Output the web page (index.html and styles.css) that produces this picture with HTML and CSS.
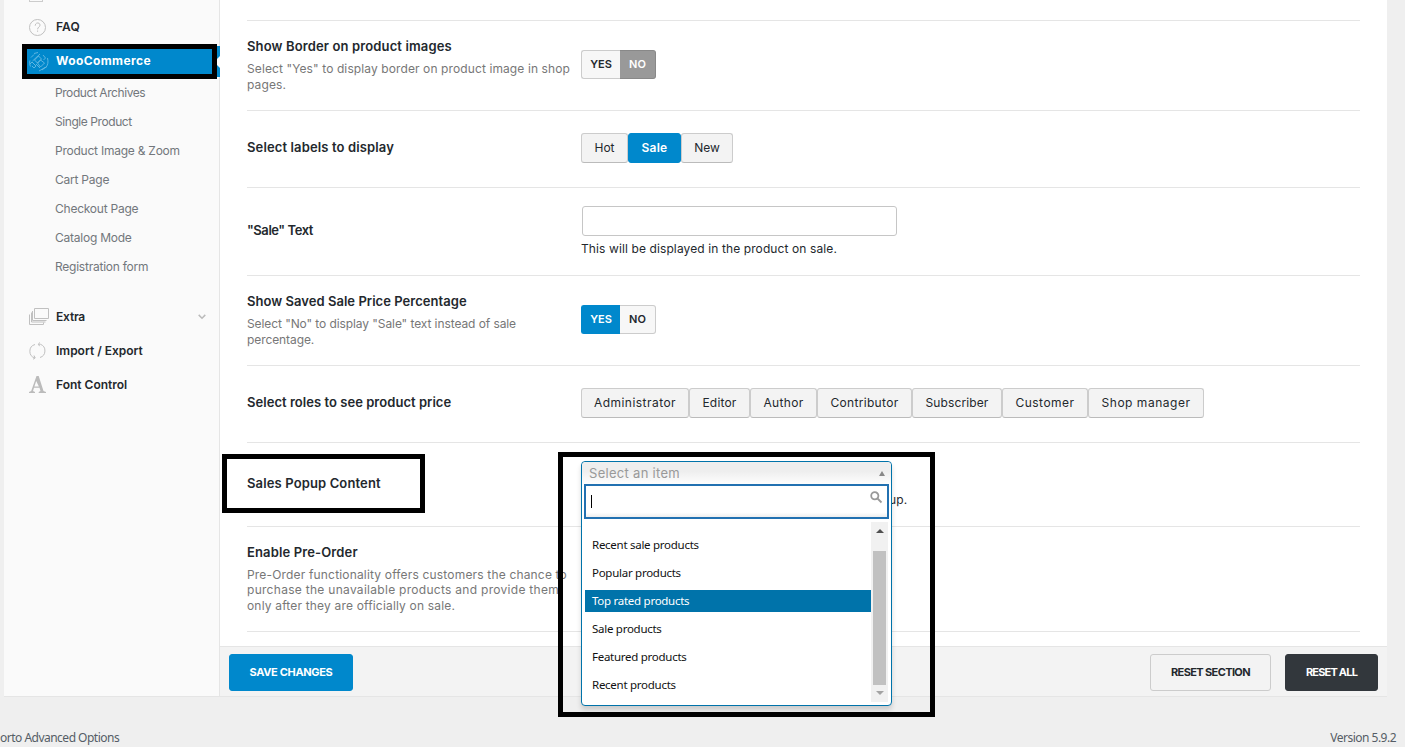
FILE: index.html
```html
<!DOCTYPE html>
<html lang="en">
<head>
<meta charset="utf-8">
<title>Porto Advanced Options</title>
<link rel="stylesheet" href="styles.css">
</head>
<body>
<div class="page">
  <div class="panel">
    <nav class="sidebar">
      <div class="cut"></div>
      <a class="item"><svg class="icon" width="20" height="20" viewBox="0 0 20 20"><circle cx="8.500" cy="10.500" r="8" /><path d="M6.200 8.700c0-3.600 4.800-3.600 4.800-.6 0 2-2.400 2-2.400 4.200M8.600 13.500v1.300"/></svg><span class="faq">FAQ</span></a>
      <a class="item active"><svg class="icon" width="20" height="20" viewBox="0 0 20 20"><path d="M5 1.500l4-1M2 5.500l3-3M3.500 9l7.500-7M1 12l2-2 4 4-2 2-2-2M5.500 8l4-4 3 3-4 4zM8.500 11l3-3 4 3-4 4zM7 12l4 4M10 19l6-3.500M13 18l4-3M18.500 6c1 4 .5 7-2 10M14 3l2.500 3-2 2M1 8.500c-.6 2-.4 4 .5 6"/></svg><span class="woo">WooCommerce</span></a>
      <div class="subs">
        <a class="tight">Product Archives</a>
        <a class="tight">Single Product</a>
        <a>Product Image &amp; Zoom</a>
        <a>Cart Page</a>
        <a>Checkout Page</a>
        <a>Catalog Mode</a>
        <a>Registration form</a>
      </div>
      <a class="item"><svg class="icon" width="20" height="20" viewBox="0 0 20 20"><path d="M5.500 1.500h14v10h-14zM3.500 4v9.500h14M2.500 5.500v9.500h14M.5 7.500v10h14v-2"/></svg><span class="extra">Extra</span><svg class="chev" width="8" height="6" viewBox="0 0 8 6"><path d="M.7.900L4 4.200 7.300.9"/></svg></a>
      <a class="item"><svg class="icon" width="20" height="20" viewBox="0 0 20 20"><path d="M6 3.500a7 7 0 0 0 0 13.500M4 18.200l2.200-1.200-1.200-2.500M11 16.500a7 7 0 0 0 .5-13.200H9.500M11 1.500l-1.800 1.700 1.500 2"/></svg><span>Import / Export</span></a>
      <a class="item"><svg class="icon solid" width="20" height="20" viewBox="0 0 20 20"><path d="M7.500 1h2.200l4.800 15 2.500 1v1H9.700v-1l1.800-1-1-3.200H5L4 16l2 1v1H0v-1l2.200-1zM7.200 6L5.400 11.500h4.500z" fill-rule="evenodd"/></svg><span>Font Control</span></a>
    </nav>
    <main class="main">
      <div class="rows">
        <section class="row r0"></section>
        <section class="row r1">
          <div class="label"><h3 class="wide">Show Border on product images</h3><p>Select "Yes" to display border on product image in shop<br>pages.</p></div>
          <div class="switch"><span class="yes">YES</span><span class="no off">NO</span></div>
        </section>
        <section class="row r2">
          <div class="label"><h3 class="wide">Select labels to display</h3></div>
          <div class="set"><span class="b47">Hot</span><span class="b53 on">Sale</span><span class="b52">New</span></div>
        </section>
        <section class="row r3">
          <div class="label"><h3 class="quoted">"Sale" Text</h3></div>
          <div class="field"><input type="text"><div class="note">This will be displayed in the product on sale.</div></div>
        </section>
        <section class="row r1">
          <div class="label"><h3>Show Saved Sale Price Percentage</h3><p class="narrow">Select "No" to display "Sale" text instead of sale<br>percentage.</p></div>
          <div class="switch"><span class="yes on">YES</span><span class="no">NO</span></div>
        </section>
        <section class="row r2">
          <div class="label"><h3>Select roles to see product price</h3></div>
          <div class="set roles"><span class="b108">Administrator</span><span class="b61">Editor</span><span class="b67">Author</span><span class="b95">Contributor</span><span class="b90">Subscriber</span><span class="b86">Customer</span><span class="b116">Shop manager</span></div>
        </section>
        <section class="row r6">
          <div class="label"><h3 class="wide">Sales Popup Content</h3></div>
          <div class="popup">
            <span class="note tail">up.</span>
            <div class="select">
              <div class="head"><span>Select an item</span><i class="up"></i></div>
              <div class="search"><span class="caret"></span><svg width="13" height="13" viewBox="0 0 13 13"><circle cx="4.800" cy="4.800" r="3.600"/><path d="M7.500 7.500l4 4"/></svg></div>
              <div class="list">
                <div class="options"><div>Recent sale products</div><div>Popular products</div><div class="hl">Top rated products</div><div>Sale products</div><div>Featured products</div><div>Recent products</div></div>
                <div class="bar"><i class="up dark"></i><b></b><i class="down"></i></div>
              </div>
            </div>
          </div>
        </section>
        <section class="row r7">
          <div class="label"><h3 class="wide">Enable Pre-Order</h3><p class="long">Pre-Order functionality offers customers the chance to<br><span>purchase the unavailable products and provide them</span><br>only after they are officially on sale.</p></div>
        </section>
      </div>
      <footer class="actions">
        <button class="save">SAVE CHANGES</button><button class="section">RESET SECTION</button><button class="all">RESET ALL</button>
      </footer>
    </main>
  </div>
  <div class="foot"><span>orto Advanced Options</span><span>Version 5.9.2</span></div>
  <div class="mark m1"></div><div class="mark m2"></div><div class="mark m3"></div>
</div>
</body>
</html>
```
FILE: styles.css
```css
* { box-sizing: border-box; }
body { margin: 0; background: #efefef; font-family: Inter, "Liberation Sans", sans-serif; font-size: 12px; color: #23282d; }
.page { position: relative; width: 1405px; height: 747px; overflow: hidden; }
.panel { display: flex; margin: 0 18px 0 4px; height: 697px; border-bottom: 1px solid #e5e5e5; }

.sidebar { width: 216px; background: #fafafa; border-right: 1px solid #e5e5e5; }
.cut { width: 14px; height: 2px; margin: 0 0 8px 25px; border: 1px solid #ccc; border-top: 0; }
.item { display: flex; align-items: center; height: 34px; padding-left: 25px; font-weight: 600; position: relative; white-space: nowrap; }
.item span { padding-bottom: 2px; }
.faq { letter-spacing: .16px; }
.woo { letter-spacing: .39px; }
.extra { letter-spacing: -.2px; }
.icon { width: 20px; height: 20px; margin-right: 7px; fill: none; stroke: #c0c0c0; stroke-width: 1; }
.icon.solid { fill: #bbb; stroke: none; }
.active { height: 31px; margin: 2px -1px 1px 20px; padding-left: 5px; background: #0088cc; color: #fff; font-weight: 700; }
.active .icon { stroke: #74c0e6; stroke-width: .8; }
.active::after { content: ""; position: absolute; right: 0; top: 10px; border: 6px solid transparent; border-right-color: #fff; border-left: 0; }
.chev { margin-left: auto; margin-right: 13px; fill: none; stroke: #bbb; stroke-width: 1.5; }
.subs { display: flex; flex-direction: column; align-items: flex-start; padding-left: 51px; margin-bottom: 19px; color: #72777c; letter-spacing: -.235px; }
.subs a { height: 29px; line-height: 29px; white-space: nowrap; }
.subs .tight { letter-spacing: -.43px; }

.main { flex: 1; display: flex; flex-direction: column; background: #fff; }
.rows { height: 646px; padding: 0 27px; }
.row { display: flex; align-items: center; border-bottom: 1px solid #e5e5e5; }
.r0 { height: 21px; }
.r1 { height: 90px; }
.r2 { height: 77px; }
.r3 { height: 88px; }
.r6 { height: 84px; }
.r7 { height: 105px; }
.label { width: 334px; white-space: nowrap; }
h3 { margin: 0; padding-bottom: 3px; font-size: 13px; line-height: 15px; font-weight: 600; letter-spacing: .04px; }
h3.wide { letter-spacing: .13px; }
h3.quoted { letter-spacing: -.44px; }
p { margin: 4px 0 0; line-height: 15.500px; color: #777; letter-spacing: .105px; }
p.narrow { letter-spacing: -.086px; }
p.long { letter-spacing: .174px; }
p.long span { letter-spacing: .287px; }

.switch { display: flex; width: 75px; height: 29px; margin-bottom: 3px; font-size: 11px; font-weight: 600; line-height: 27px; text-align: center; }
.switch span { border: 1px solid #ccc; background: #f7f7f7; }
.switch .yes { width: 39px; border-right: 0; border-radius: 3px 0 0 3px; }
.switch .no { width: 36px; border-left: 0; border-radius: 0 3px 3px 0; }
.switch .off { background: #999; border-color: #888; color: #fff; }
.switch .on { background: #0088cc; border-color: #0088cc; color: #fff; }

.set { display: flex; height: 30px; margin-bottom: 3px; line-height: 27px; text-align: center; }
.set span { border: 1px solid #ccc; border-bottom-color: #bbb; background: #f3f3f3; border-radius: 3px; white-space: nowrap; }
.set .on { background: #0088cc; border-color: #0088cc; color: #fff; font-weight: 600; letter-spacing: .25px; }
.b47 { width: 47px; }
.b53 { width: 53px; }
.b52 { width: 52px; }
.roles .b108 { width: 108px; letter-spacing: .46px; }
.roles .b61 { width: 61px; letter-spacing: .17px; }
.roles .b67 { width: 67px; letter-spacing: .31px; }
.roles .b95 { width: 95px; letter-spacing: .31px; }
.roles .b90 { width: 90px; letter-spacing: .12px; }
.roles .b86 { width: 86px; letter-spacing: .47px; }
.roles .b116 { width: 116px; letter-spacing: .52px; }

.field { padding-bottom: 1px; }
input { display: block; width: 315px; height: 30px; margin: 0 0 5px 1px; border: 1px solid #c6c6c6; border-radius: 3px; background: #fff; }
.note { line-height: 16px; white-space: nowrap; letter-spacing: .108px; }

.popup { position: relative; width: 326px; height: 84px; }
.tail { position: absolute; left: 308px; top: 49px; }
.select { position: absolute; z-index: 2; left: 0; top: 18px; width: 311px; height: 245px; border: 1px solid #0073aa; border-radius: 4px; background: #fff; box-shadow: 0 4px 5px rgba(0,0,0,.15); }
.head { display: flex; align-items: center; justify-content: space-between; height: 23px; padding: 0 6px 0 7px; border-radius: 4px 4px 0 0; font-size: 13px; color: #999; letter-spacing: .3px; background: linear-gradient(#eee 40%, #fff); }
.up, .down { border: 3px solid transparent; border-top: 0; border-bottom: 5px solid #888; }
.search { display: flex; justify-content: space-between; height: 35px; margin: -1px 2px 0; border: 2px solid #2271b1; background: linear-gradient(#fff 85%, #eee); padding: 5px 4px 0 5px; }
.search svg { fill: none; stroke: #999; stroke-width: 1.800; }
.caret { width: 1px; height: 13px; background: #000; margin-top: 4px; }
.list { display: flex; height: 180px; margin: 3px 3px 0; }
.options { width: 286px; padding-top: 12px; font-family: "Noto Sans", sans-serif; font-size: 11.500px; letter-spacing: -.27px; color: #111; }
.options div { height: 22px; line-height: 22px; padding-left: 7px; margin-bottom: 6.200px; white-space: nowrap; }
.options .hl { background: #0073aa; color: #fff; }
.bar { width: 17px; display: flex; flex-direction: column; align-items: center; background: #f1f1f1; padding: 7px 0; }
.up.dark { border-width: 0 4px 4px; border-bottom-color: #505050; }
.bar b { width: 13px; height: 134px; margin: 18px 0 6px; background: #c1c1c1; }
.down { border: 4px solid transparent; border-bottom: 0; border-top-color: #a3a3a3; }

.actions { display: flex; align-items: flex-start; height: 50px; padding: 7px 9px; background: #f3f3f3; border-top: 1px solid #e5e5e5; }
button { height: 37px; border: 1px solid #ccc; border-radius: 3px; padding: 0 0 2px; font: 700 11px Inter, sans-serif; color: #23282d; white-space: nowrap; }
.save { width: 124px; background: #0088cc; border-color: #0088cc; color: #fff; letter-spacing: -.33px; }
.section { width: 121px; margin-left: auto; background: #f3f3f3; letter-spacing: -.62px; }
.all { width: 93px; margin-left: 14px; background: #32373c; border-color: #32373c; color: #fff; letter-spacing: -.8px; }
.foot { display: flex; justify-content: space-between; margin-top: 32px; padding-right: 9px; font: 12px/18px "Noto Sans", sans-serif; letter-spacing: -.51px; color: #555d66; }

.mark { position: absolute; z-index: 5; border: 5px solid #000; }
.m1 { left: 22px; top: 44px; width: 195px; height: 35px; }
.m2 { left: 222px; top: 454px; width: 203px; height: 59px; }
.m3 { left: 558px; top: 452px; width: 377px; height: 265px; }
```
